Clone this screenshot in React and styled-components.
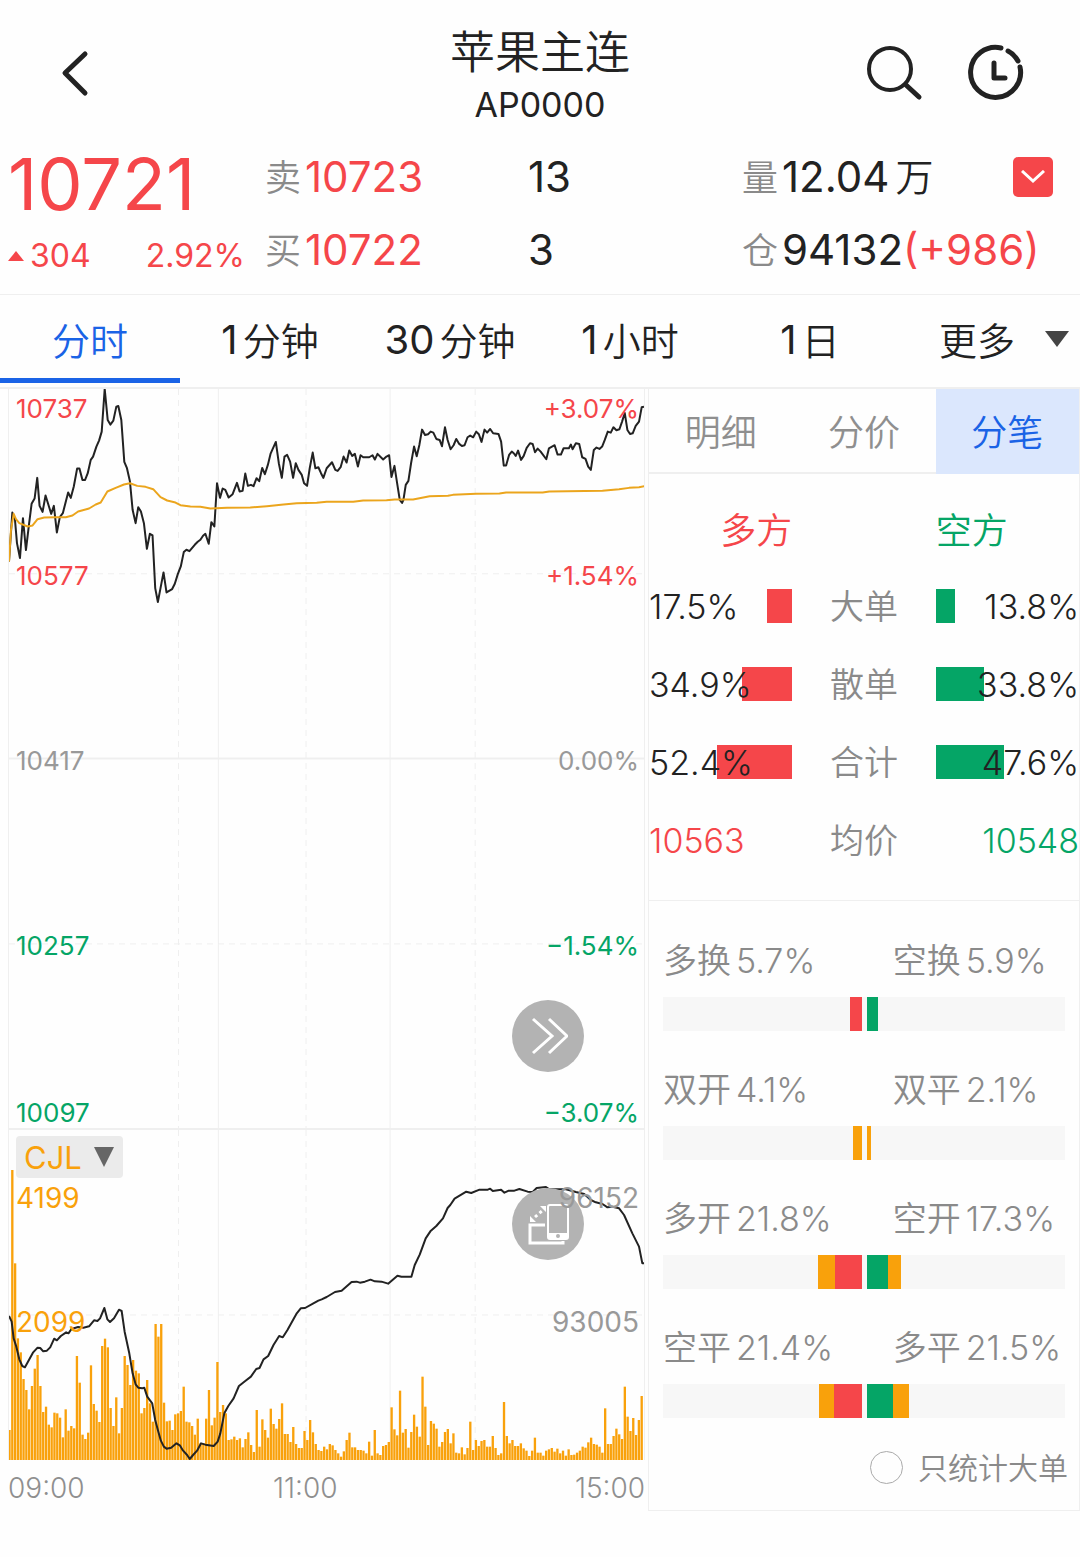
import React, { useState } from 'react'
import styled, { createGlobalStyle } from 'styled-components';

const red = '#f5464a';
const green = '#05a566';
const orange = '#f9a10b';
const blue = '#1a63e6';
const line = '#efefef';

// chart points are plotted in thirds of a pixel, the late ones are shifted by LATE_OFFSET
const LATE_OFFSET = 960;

const priceEarly = '24,545 34,398 42,420 48,490 57,535 66,415 75,511 84,435 92,372 101,356 109,294 116,378 125,396 134,347 151,402 159,378 168,458 177,412 186,400 202,338 210,354 219,320 229,266 236,266 245,300 253,300 261,280 270,240 277,230 287,200 295,182 303,155 312,27 321,120 329,134 338,122 347,80 353,78 362,120 371,246 379,265 388,305 396,390 405,430 413,382 421,395 430,430 439,507 448,462 456,467 464,625 472,667 480,625 489,578 498,638 515,628 523,612 532,583 541,560 550,517 558,510 567,514 583,495 592,486 600,480 608,468 615,462 625,492 633,427 642,440 650,310 659,354 667,326 675,330 685,353 697,343 710,309 718,335 727,333 735,281 743,318 752,315 760,319 769,295 777,304 786,264 794,283 803,255 811,222 827,186 836,250 845,294 853,230 861,225 870,245 879,294 887,250 895,270 905,285 912,310 921,318 929,265 938,218 946,265 955,262 963,280';
const priceLate = '10,294 20,265 36,247 46,270 53,273 62,262 71,230 80,248 88,212 97,228 105,222 114,260 122,226 130,232 148,232 158,226 165,239 173,222 190,239 200,230 208,226 215,291 224,258 232,310 240,360 247,369 251,360 258,315 266,303 274,250 283,200 291,229 299,195 307,149 316,165 325,163 333,155 341,158 350,177 360,180 367,199 376,142 384,180 393,208 402,196 410,177 418,191 427,198 435,196 444,172 452,167 461,172 470,155 478,163 486,186 495,149 503,158 512,147 521,160 537,162 545,185 553,257 560,257 569,225 577,215 583,220 589,228 596,212 605,240 613,228 622,204 632,190 640,192 647,217 655,206 664,215 681,238 689,205 698,200 706,196 715,224 725,224 733,205 749,205 755,194 760,208 770,190 780,192 789,232 799,237 807,260 815,270 824,210 832,203 841,207 849,200 857,180 866,155 875,158 883,142 892,151 901,148 909,125 917,99 925,150 933,162 941,160 950,138 960,125 968,82 975,80';

const averageEarly = '24,545 30,450 38,402 45,418 55,430 80,440 95,437 110,418 130,413 165,412 195,412 215,407 232,395 265,386 285,374 300,368 320,335 345,324 370,314 388,310 410,318 435,321 458,328 480,352 500,362 525,368 540,376 570,380 600,381 630,386 680,384 750,383 800,379 850,374 890,370 950,369';
const averageLate = '20,366 100,366 130,362 200,361 225,359 280,359 330,349 385,348 400,345 470,342 540,341 560,338 670,338 690,335 850,333 900,328 930,324 960,322 976,319';

const holdingEarly = '24,588 32,605 38,655 46,680 55,718 64,738 72,742 84,720 96,698 110,683 118,684 127,694 138,692 148,682 160,656 168,661 180,648 196,637 203,640 212,627 232,621 248,623 265,619 280,601 290,603 298,595 311,564 320,598 328,606 340,595 355,569 363,573 372,635 386,700 396,760 405,793 413,803 425,805 431,803 440,830 455,850 464,900 472,930 481,962 490,980 498,986 512,983 528,970 538,976 548,992 560,1005 568,1017 578,1005 590,992 602,970 615,974 640,978 652,965 660,940 672,880 684,858 700,835 716,798 735,783 752,770 768,747 778,744 790,718 804,708 820,675 837,648 848,652 862,630 890,580 902,565 915,564 940,550 955,542';
const holdingLate = '5,538 20,531 45,516 65,512 95,486 110,485 120,488 135,485 152,479 165,484 185,485 205,491 233,467 245,470 275,470 285,435 300,404 318,355 332,334 350,318 370,295 384,264 392,255 405,236 425,224 440,215 455,219 480,209 505,209 512,206 520,213 545,209 555,218 568,212 585,212 600,207 625,215 640,216 652,204 680,201 690,208 740,208 770,216 795,222 815,240 830,247 850,252 865,262 880,260 900,265 915,285 940,340 960,380 970,430 976,430';

// top edge of every one-minute volume bar
const VOLUME_BASE = 1020;
const volumeTops = [
  930, 150, 430, 655, 697, 777, 810, 868, 798, 746, 705, 798, 876, 860, 914, 922, 878, 880, 893, 952,
  868, 932, 918, 925, 708, 788, 944, 957, 938, 736, 852, 872, 906, 678, 656, 682, 864, 918, 832, 940,
  864, 708, 735, 795, 720, 752, 760, 880, 864, 780, 850, 905, 612, 650, 612, 848, 904, 902, 930, 883,
  880, 873, 800, 905, 907, 918, 944, 896, 970, 970, 896, 810, 916, 893, 726, 876, 855, 880, 960, 958,
  950, 960, 955, 982, 957, 937, 975, 996, 870, 980, 898, 930, 953, 866, 912, 926, 897, 850, 942, 942,
  966, 921, 972, 984, 984, 933, 960, 900, 937, 972, 990, 993, 980, 988, 972, 976, 990, 1000, 1010, 994,
  960, 938, 982, 982, 990, 990, 992, 1000, 965, 1007, 930, 1000, 1005, 978, 975, 966, 862, 928, 946, 812,
  938, 927, 983, 936, 884, 920, 950, 770, 860, 975, 903, 911, 926, 980, 966, 936, 927, 970, 940, 998,
  1000, 982, 1003, 984, 905, 990, 960, 978, 963, 960, 980, 980, 948, 984, 1005, 1000, 846, 948, 970, 960,
  978, 978, 970, 985, 992, 1008, 992, 953, 998, 998, 1007, 992, 988, 984, 995, 986, 1000, 992, 1007, 988,
  1005, 1004, 998, 992, 980, 983, 967, 953, 972, 974, 980, 998, 865, 972, 972, 948, 926, 943, 957, 800,
  890, 933, 894, 945, 900, 828
];

const periods = [
  {unit: '分时'},
  {count: '1', unit: '分钟'},
  {count: '30', unit: '分钟'},
  {count: '1', unit: '小时'},
  {count: '1', unit: '日'}
];
const sideTabs = ['明细', '分价', '分笔'];

const orders = [
  {label: '大单', long: 17.5, short: 13.8},
  {label: '散单', long: 34.9, short: 33.8},
  {label: '合计', long: 52.4, short: 47.6}
];

const flows = [
  {
    left: ['多换', '5.7%'], right: ['空换', '5.9%'],
    leftParts: [[red, 6]], rightParts: [[green, 6]]
  },
  {
    left: ['双开', '4.1%'], right: ['双平', '2.1%'],
    leftParts: [[orange, 4.5]], rightParts: [[orange, 2.5]]
  },
  {
    left: ['多开', '21.8%'], right: ['空开', '17.3%'],
    leftParts: [[orange, 8.4], [red, 13.4]], rightParts: [[green, 11], [orange, 6.3]]
  },
  {
    left: ['空平', '21.4%'], right: ['多平', '21.5%'],
    leftParts: [[orange, 7.6], [red, 13.8]], rightParts: [[green, 13.1], [orange, 8.4]]
  }
];

const joinPoints = (early, late) => {
  const shifted = late.split(' ').map((point) => {
    const [x, y] = point.split(',').map(Number);
    return `${x + LATE_OFFSET},${y}`;
  });
  return `${early} ${shifted.join(' ')}`;
}

const Grid = ({top, bottom, dashedRows, solidRows}) => (
  <g stroke={line} fill='none'>
    {[654, 1171].map((x) => <GridLine key={x} x1={x} x2={x} y1={top} y2={bottom} />)}
    {[534, 918, 1427].map((x) => <GridLine key={x} x1={x} x2={x} y1={top} y2={bottom} strokeDasharray='6 5' />)}
    {dashedRows.map((y) => <GridLine key={y} x1={24} x2={1935} y1={y} y2={y} strokeDasharray='6 5' />)}
    {solidRows.map((y) => <GridLine key={y} x1={24} x2={1935} y1={y} y2={y} strokeWidth='2' />)}
  </g>
)

const PriceChart = () => (
  <Plot viewBox='24 27 1911 2220' preserveAspectRatio='none'>
    <Grid top={27} bottom={2247} dashedRows={[582, 1694]} solidRows={[1137]} />
    <Curve points={joinPoints(priceEarly, priceLate)} stroke='#222' />
    <Curve points={joinPoints(averageEarly, averageLate)} stroke='#eba51d' />
  </Plot>
)

const VolumeChart = () => {
  const step = 1911 / volumeTops.length;
  return <Plot viewBox='24 30 1911 990' preserveAspectRatio='none'>
    <Grid top={30} bottom={1020} dashedRows={[585]} solidRows={[]} />
    {volumeTops.map((top, index) => (
      <rect key={index} x={22 + index * step} y={top} width='7' height={VOLUME_BASE - top} fill={orange} />
    ))}
    <Curve points={joinPoints(holdingEarly, holdingLate)} stroke='#222' />
  </Plot>
}

const App = () => {
  const [period, setPeriod] = useState(0);
  const [sideTab, setSideTab] = useState('分笔');
  const [onlyBig, setOnlyBig] = useState(false);

  return <>
    <GlobalStyle />
    <Page>
      <Header>
        <IconButton aria-label='返回'>
          <svg width='60' height='60' viewBox='0 0 60 60' fill='none' stroke='#222' strokeWidth='5' strokeLinecap='round' strokeLinejoin='round'>
            <path d='M32 12 12 31l20 20' />
          </svg>
        </IconButton>
        <Title>
          <h1>苹果主连</h1>
          <p>AP0000</p>
        </Title>
        <HeaderTools>
          <IconButton aria-label='搜索'>
            <svg width='60' height='60' viewBox='0 0 60 60' fill='none' stroke='#222' strokeWidth='4' strokeLinecap='round'>
              <circle cx='25' cy='27' r='21' />
              <path d='m41 43 13 12' strokeWidth='5' />
            </svg>
          </IconButton>
          <IconButton aria-label='历史'>
            <svg width='60' height='60' viewBox='0 0 60 60' fill='none' stroke='#222' strokeWidth='5' strokeLinecap='round' strokeLinejoin='round'>
              <path d='M34 6A25 25 0 1 0 53 25M41 9q6 3 10 10' />
              <path d='M27 21v15h11' />
            </svg>
          </IconButton>
        </HeaderTools>
      </Header>

      <Quote>
        <Latest>
          <strong>10721</strong>
          <div>
            <span>
              <svg width='16' height='10' viewBox='0 0 16 10' fill={red}><path d='M8 0l8 10H0z' /></svg>
              304
            </span>
            <span>2.92%</span>
          </div>
        </Latest>
        <Figure $color={red}><em>卖</em>10723</Figure>
        <Figure>13</Figure>
        <Figure>
          <em>量</em>12.04<span>万</span>
          <ExpandButton aria-label='展开'>
            <svg width='24' height='14' viewBox='0 0 24 14' fill='none' stroke='#fff' strokeWidth='3'><path d='m1 1 11 10L23 1' /></svg>
          </ExpandButton>
        </Figure>
        <Figure $color={red}><em>买</em>10722</Figure>
        <Figure>3</Figure>
        <Figure><em>仓</em>94132<b>(+986)</b></Figure>
      </Quote>

      <Periods>
        {periods.map(({count, unit}, index) => (
          <PeriodButton key={index} $active={index === period} onClick={() => setPeriod(index)}>
            {count && <b>{count}</b>}
            <span>{unit}</span>
          </PeriodButton>
        ))}
        <MoreButton>
          <span>更多</span>
          <svg width='24' height='16' viewBox='0 0 24 16' fill='#444'><path d='M0 0h24L12 16z' /></svg>
        </MoreButton>
      </Periods>

      <Body>
        <Charts>
          <PriceArea>
            <PriceChart />
            <Scale>
              <ScaleRow $color={red}><span>10737</span><span>+3.07%</span></ScaleRow>
              <ScaleRow $color={red}><span>10577</span><span>+1.54%</span></ScaleRow>
              <ScaleRow><span>10417</span><span>0.00%</span></ScaleRow>
              <ScaleRow $color={green}><span>10257</span><span>−1.54%</span></ScaleRow>
              <ScaleRow $color={green}><span>10097</span><span>−3.07%</span></ScaleRow>
            </Scale>
            <RoundButton aria-label='收起' $bottom='56px'>
              <svg width='40' height='38' viewBox='0 0 40 38' fill='none' stroke='#fff' strokeWidth='3'>
                <path d='m5 2 19 17L5 36M21 2l18 17-18 17' />
              </svg>
            </RoundButton>
          </PriceArea>
          <VolumeArea>
            <VolumeChart />
            <RoundButton aria-label='横屏' $bottom='200px'>
              <svg width='42' height='42' viewBox='0 0 42 42' fill='none' stroke='#fff' strokeWidth='2'>
                <path d='M18 22H3v18h33v-2' strokeWidth='3' />
                <rect x='21' y='2' width='20' height='34' rx='2' fill='#b3b3b3' />
                <path d='M21 33h20' strokeWidth='6' />
                <circle cx='31' cy='33' r='1' stroke='#b3b3b3' />
                <path d='m8 14 9-8' strokeWidth='3' strokeDasharray='3 3' />
                <path d='M3 13v6h6zM19 3h-6l6 6z' fill='#fff' stroke='none' />
              </svg>
            </RoundButton>
            <VolumeScale>
              <IndicatorButton>
                CJL
                <svg width='20' height='20' viewBox='0 0 20 20' fill='#666'><path d='M0 0h20L10 20z' /></svg>
              </IndicatorButton>
              <VolumeRow><span>4199</span><em>96152</em></VolumeRow>
              <VolumeRow><span>2099</span><em>93005</em></VolumeRow>
            </VolumeScale>
          </VolumeArea>
          <TimeAxis><span>09:00</span><span>11:00</span><span>15:00</span></TimeAxis>
        </Charts>

        <Side>
          <SideTabs>
            {sideTabs.map((name) => (
              <SideTab key={name} $active={name === sideTab} onClick={() => setSideTab(name)}>{name}</SideTab>
            ))}
          </SideTabs>

          <Orders>
            <OrderHead $color={red} $align='flex-end'>多方</OrderHead>
            <span />
            <OrderHead $color={green}>空方</OrderHead>
            {orders.map(({label, long, short}) => (
              <React.Fragment key={label}>
                <OrderCell>
                  <OrderBar $side='right' $color={red} style={{width: `${long}%`}} />
                  <span>{long}%</span>
                </OrderCell>
                <OrderLabel>{label}</OrderLabel>
                <OrderCell $align='flex-end'>
                  <OrderBar $side='left' $color={green} style={{width: `${short}%`}} />
                  <span>{short}%</span>
                </OrderCell>
              </React.Fragment>
            ))}
            <OrderCell $color={red}>10563</OrderCell>
            <OrderLabel>均价</OrderLabel>
            <OrderCell $color={green} $align='flex-end'>10548</OrderCell>
          </Orders>

          <Flows>
            {flows.map(({left, right, leftParts, rightParts}) => (
              <div key={left[0]}>
                <FlowLabels>
                  <FlowLabel><em>{left[0]}</em>{left[1]}</FlowLabel>
                  <FlowLabel><em>{right[0]}</em>{right[1]}</FlowLabel>
                </FlowLabels>
                <FlowTrack>
                  <FlowHalf $align='flex-end'>
                    {leftParts.map(([color, share]) => <FlowPart key={color} $color={color} style={{width: `${share}%`}} />)}
                  </FlowHalf>
                  <FlowHalf>
                    {rightParts.map(([color, share]) => <FlowPart key={color} $color={color} style={{width: `${share}%`}} />)}
                  </FlowHalf>
                </FlowTrack>
              </div>
            ))}
          </Flows>

          <BigOnly>
            <input type='checkbox' checked={onlyBig} onChange={() => setOnlyBig(!onlyBig)} />
            <span>只统计大单</span>
          </BigOnly>
        </Side>
      </Body>
    </Page>
  </>
}

const GlobalStyle = createGlobalStyle`
  * {
    box-sizing: border-box;
    margin: 0;
    padding: 0;
  }

  body {
    background: #fefefe;
    color: #222;
    font-family: Inter, 'Noto Sans CJK SC', sans-serif;
    font-weight: 350;
  }

  button {
    border: none;
    background: none;
    color: inherit;
    font: inherit;
    cursor: pointer;
  }

  em {
    font-style: normal;
  }

  b, strong, h1 {
    font-weight: inherit;
  }

  svg {
    flex-shrink: 0;
  }
`;

const Page = styled.main`
  width: 100%;
  overflow: hidden;
`;

const Header = styled.header`
  display: grid;
  grid-template-columns: 1fr auto 1fr;
  align-items: center;
  height: 140px;
  padding: 4px 53px 0;
`;

const IconButton = styled.button`
  width: 60px;
  height: 60px;
`;

const HeaderTools = styled.div`
  display: flex;
  justify-content: flex-end;
  gap: 42px;
`;

const Title = styled.div`
  padding-top: 10px;
  text-align: center;

  h1 {
    font-size: 45px;
    line-height: 56px;
  }

  p {
    font-size: 34px;
    font-weight: 400;
    line-height: 48px;
  }
`;

const Quote = styled.section`
  display: grid;
  grid-template-columns: 257fr 263fr 214fr 338fr;
  grid-template-rows: 73px 73px;
  padding: 0 0 8px 8px;
  border-bottom: 1px solid ${line};
`;

const Latest = styled.div`
  grid-row: span 2;
  padding: 8px 20px 0 0;
  color: ${red};
  font-weight: 400;

  strong {
    display: block;
    font-size: 72px;
    line-height: 72px;
  }

  div {
    display: flex;
    justify-content: space-between;
    margin-top: 18px;
    font-size: 32px;
    line-height: 36px;
  }

  span {
    display: flex;
    align-items: center;
    gap: 6px;
  }
`;

const Figure = styled.div`
  display: flex;
  align-items: center;
  color: ${({$color}) => $color || '#222'};
  font-size: 42px;
  font-weight: 400;
  white-space: nowrap;

  em {
    margin-right: 4px;
    padding-bottom: 4px;
    color: #8a8a8a;
    font-size: 36px;
    font-weight: 350;
  }

  b {
    color: ${red};
  }

  span {
    margin-left: 6px;
    padding-bottom: 4px;
    font-size: 38px;
    font-weight: 350;
  }
`;

const ExpandButton = styled.button`
  display: flex;
  align-items: center;
  justify-content: center;
  width: 40px;
  height: 40px;
  margin: 0 27px 0 auto;
  border-radius: 5px;
  background: ${red};
`;

const Periods = styled.nav`
  display: grid;
  grid-template-columns: repeat(6, 1fr);
  height: 94px;
  padding-bottom: 4px;
  border-bottom: 2px solid ${line};
  font-size: 38px;

  span {
    padding-bottom: 2px;
  }

  b {
    font-size: 40px;
    font-weight: 400;
  }
`;

const PeriodButton = styled.button`
  display: flex;
  align-items: center;
  justify-content: center;
  gap: 5px;
  border-top: 5px solid transparent;
  border-bottom: 5px solid ${({$active}) => $active ? blue : 'transparent'};
  color: ${({$active}) => $active ? blue : '#222'};
  white-space: nowrap;
`;

const MoreButton = styled.button`
  display: flex;
  align-items: center;
  justify-content: flex-end;
  gap: 30px;
  padding-right: 11px;
`;

const Body = styled.div`
  display: grid;
  grid-template-columns: 3fr 2fr;
  align-items: start;
`;

const Charts = styled.section`
  min-width: 0;
  padding: 0 3px 0 8px;
`;

const PriceArea = styled.div`
  position: relative;
  height: 741px;
  border: solid ${line};
  border-width: 0 1px 2px;
`;

const VolumeArea = styled.div`
  position: relative;
  height: 330px;
  border: solid ${line};
  border-width: 0 1px;
`;

const Plot = styled.svg`
  display: block;
  width: 100%;
  height: 100%;
`;

const GridLine = styled.line`
  vector-effect: non-scaling-stroke;
`;

const Curve = styled.polyline`
  fill: none;
  stroke-width: 2;
  stroke-linejoin: round;
  vector-effect: non-scaling-stroke;
`;

// labels lie over the plot
const Scale = styled.div`
  position: absolute;
  inset: 4px 5px 0 7px;
  display: grid;
  grid-template-rows: 167px 185px 185px 167px 32px;
  font-size: 26px;
  font-weight: 400;
  line-height: 32px;
`;

const ScaleRow = styled.div`
  display: flex;
  justify-content: space-between;
  color: ${({$color}) => $color || '#999'};
`;

const RoundButton = styled.button`
  position: absolute;
  right: 60px;
  bottom: ${({$bottom}) => $bottom};
  display: flex;
  align-items: center;
  justify-content: center;
  width: 72px;
  height: 72px;
  border-radius: 50%;
  background: #b3b3b3;
`;

const VolumeScale = styled.div`
  position: absolute;
  inset: 6px 5px 0 7px;
  font-weight: 400;
  pointer-events: none;
`;

const IndicatorButton = styled.button`
  display: flex;
  align-items: center;
  justify-content: space-between;
  width: 107px;
  height: 42px;
  padding: 0 9px 0 8px;
  border-radius: 4px;
  background: #ebebeb;
  color: ${orange};
  font-size: 31px;
  pointer-events: auto;
`;

const VolumeRow = styled.div`
  display: flex;
  justify-content: space-between;
  height: 124px;
  color: ${orange};
  font-size: 28px;
  line-height: 40px;

  em {
    color: #999;
  }
`;

const TimeAxis = styled.div`
  display: grid;
  grid-template-columns: 5fr 4fr 6fr;
  padding-top: 8px;
  color: #8f8f8f;
  font-size: 28px;
  line-height: 40px;

  span:nth-child(2) {
    text-align: center;
  }

  span:last-child {
    text-align: right;
  }
`;

const Side = styled.aside`
  min-width: 0;
  border: solid ${line};
  border-width: 0 1px 1px;
`;

const SideTabs = styled.div`
  display: grid;
  grid-template-columns: repeat(3, 1fr);
  height: 85px;
  font-size: 36px;
`;

const SideTab = styled.button`
  padding-bottom: 2px;
  border-bottom: 2px solid ${({$active}) => $active ? '#dbe7fd' : line};
  background: ${({$active}) => $active ? '#dbe7fd' : 'none'};
  color: ${({$active}) => $active ? blue : '#8f8f8f'};
`;

const Orders = styled.div`
  display: grid;
  grid-template-columns: repeat(3, 1fr);
  grid-auto-rows: 78px;
  padding: 15px 0 21px;
  border-bottom: 1px solid ${line};
`;

const OrderCell = styled.div`
  position: relative;
  display: flex;
  align-items: center;
  justify-content: ${({$align}) => $align || 'flex-start'};
  color: ${({$color}) => $color || '#222'};
  font-size: 34px;

  span {
    position: relative;
  }
`;

const OrderHead = styled(OrderCell)`
  font-size: 36px;
`;

const OrderLabel = styled(OrderCell)`
  justify-content: center;
  padding-bottom: 4px;
  color: #8a8a8a;
`;

const OrderBar = styled.div`
  position: absolute;
  top: 22px;
  ${({$side}) => $side}: 0;
  height: 34px;
  background: ${({$color}) => $color};
`;

const Flows = styled.div`
  display: grid;
  gap: 33px;
  padding: 34px 14px 22px;
`;

const FlowLabels = styled.div`
  display: grid;
  grid-template-columns: 4fr 3fr;
  white-space: nowrap;
`;

const FlowLabel = styled.div`
  display: flex;
  align-items: center;
  gap: 5px;
  height: 50px;
  color: #8a8a8a;
  font-size: 34px;

  em {
    padding-bottom: 4px;
  }
`;

const FlowTrack = styled.div`
  display: grid;
  grid-template-columns: 1fr 1fr;
  gap: 5px;
  height: 34px;
  margin-top: 12px;
  background: #f7f7f7;
`;

const FlowHalf = styled.div`
  display: flex;
  justify-content: ${({$align}) => $align || 'flex-start'};
`;

const FlowPart = styled.div`
  background: ${({$color}) => $color};
`;

const BigOnly = styled.label`
  display: flex;
  align-items: center;
  justify-content: flex-end;
  gap: 15px;
  height: 54px;
  margin-bottom: 16px;
  padding-right: 11px;
  color: #8a8a8a;
  font-size: 30px;

  span {
    padding-bottom: 2px;
  }

  input {
    appearance: none;
    width: 33px;
    height: 33px;
    border: 1px solid #aaa;
    border-radius: 50%;
  }

  input:checked {
    background: ${blue};
  }
`;

export default App
